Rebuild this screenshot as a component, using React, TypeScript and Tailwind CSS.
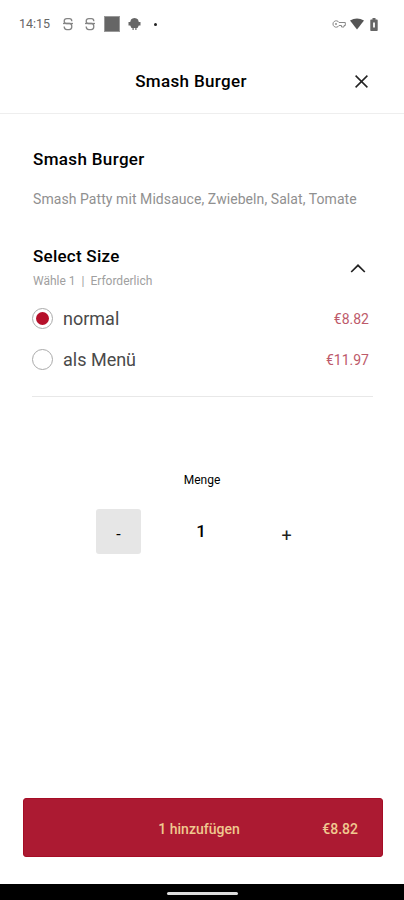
import React, { useState } from 'react'

interface SizeOption {
  id: string
  label: string
  price: number
}

const sizes: SizeOption[] = [
  { id: 'normal', label: 'normal', price: 8.82 },
  { id: 'menu', label: 'als Menü', price: 11.97 },
]

const formatPrice = (value: number) => `€${value.toFixed(2)}`

const SIcon: React.FC = () => (
  <svg className="h-[14px] w-[12px]" viewBox="0 0 12 14" fill="none" stroke="#858585" strokeWidth="1.3">
    <path d="M9.800 4.200Q9.800 1.600 7.500 1.600H4.800Q2.200 1.600 2.200 4Q2.200 6.500 4.500 6.500H7.500Q9.800 6.500 9.800 9.500Q9.800 12.600 7.200 12.600H4.800Q2.200 12.600 2.200 9.500" />
    <path d="M1 6.500H11" />
  </svg>
)

const StatusBar: React.FC = () => (
  <div className="flex h-12 items-center justify-between pl-[19px] pr-[26px]">
    <div className="flex items-center">
      <span className="w-[43px] whitespace-nowrap text-[12.5px] text-[#666]">14:15</span>
      <SIcon />
      <span className="w-[10px]" />
      <SIcon />
      <span className="ml-[9px] h-[14px] w-[14px] bg-[#666] outline outline-1 outline-[#999]" />
      <svg className="ml-[9px] h-[14px] w-[13px]" viewBox="0 0 13 14" fill="#666">
        <path d="M3 2.500L4.500 1.500Q6.500 .5 8.500 1.500L10 2.500L10.800 5H12.500V8.500H10.800L9.500 11H8.500V13H7.300V11H5.700V13H4.500V11H3.500L2.200 8.500H.5V5H2.200Z" />
      </svg>
      <span className="ml-[13px] h-[3px] w-[3px] rounded-full bg-[#222]" />
    </div>
    <div className="flex items-center">
      <svg className="h-[8px] w-[14px]" viewBox="0 0 14 8" fill="none" stroke="#888" strokeWidth="1">
        <path d="M7 2.500A3.200 3.200 0 1 0 7 5.500H9.500V7H12V5.500H13.300V2.500Z" />
        <circle cx="4" cy="4" r=".6" />
      </svg>
      <svg className="ml-[4px] h-[12px] w-[14px]" viewBox="0 0 14 12" fill="#555">
        <path d="M0 2.500Q7-1.500 14 2.500L7 11.500Z" />
      </svg>
      <svg className="ml-[6px] h-[13px] w-[8px]" viewBox="0 0 8 13">
        <path d="M2.500 0H5.500V1.500H7Q7.700 1.500 7.700 2.200V12.300Q7.700 13 7 13H1Q.3 13 .3 12.300V2.200Q.3 1.500 1 1.500H2.500Z" fill="#666" />
        <path d="M3 4.500H5V9.500H3Z" fill="#eee" />
      </svg>
    </div>
  </div>
)

const App: React.FC = () => {
  const [selected, setSelected] = useState('normal')
  const [amount, setAmount] = useState(1)

  const size = sizes.find((s) => s.id === selected) ?? sizes[0]

  return (
    <div className="flex h-[900px] w-[404px] flex-col bg-white font-['Roboto',sans-serif] text-black">
      <StatusBar />

      <header className="grid h-[66px] grid-cols-[60px_1fr_60px] items-center border-b border-[#eee] pt-px">
        <h1 className="col-start-2 -ml-[22px] pt-px text-center text-[17px] font-medium tracking-[0.35px]">Smash Burger</h1>
        <button className="flex justify-start pl-[11px]" aria-label="Close">
          <svg className="h-[13px] w-[13px]" viewBox="0 0 13 13" fill="none" stroke="#222" strokeWidth="1.5">
            <path d="M.6 .6L12.400 12.400M12.400 .6L.6 12.400" />
          </svg>
        </button>
      </header>

      <main className="flex grow flex-col pl-8 pr-[31px]">
        <h2 className="mt-[33px] h-6 pl-px text-[17px] font-medium leading-6 tracking-[0.35px]">Smash Burger</h2>
        <p className="mt-[18px] h-5 whitespace-nowrap pl-px text-[14px] leading-5 tracking-[0.07px] text-[#909090]">
          Smash Patty mit Midsauce, Zwiebeln, Salat, Tomate
        </p>

        <section className="mt-[35px] border-b border-[#e8e8e8] pb-[16px]">
          <div className="flex items-start justify-between pl-px">
            <div>
              <h2 className="h-6 text-[17px] font-medium leading-6 tracking-[0.25px]">Select Size</h2>
              <p className="mt-[5px] h-4 whitespace-pre text-[12px] leading-4 text-[#a0a0a0]">Wähle 1  |  Erforderlich</p>
            </div>
            <svg className="mr-[7px] mt-[20px] h-[9px] w-[16px]" viewBox="0 0 16 9" fill="none" stroke="#222" strokeWidth="1.7">
              <path d="M1.200 8L8 1.300L14.800 8" />
            </svg>
          </div>

          <div className="mt-[9px]">
            {sizes.map((option) => (
              <button
                key={option.id}
                onClick={() => setSelected(option.id)}
                className="flex h-[41px] w-full items-center pr-[4px]"
              >
                <span className="flex h-[21px] w-[21px] items-center justify-center rounded-full border border-[#aaa]">
                  {selected === option.id && <span className="h-[13px] w-[13px] rounded-full bg-[#b5102a]" />}
                </span>
                <span className="ml-[10px] text-[18px] text-[#4a4a4a]">{option.label}</span>
                <span className="ml-auto pt-px text-[14px] text-[#bd5a6a]">{formatPrice(option.price)}</span>
              </button>
            ))}
          </div>
        </section>

        <section className="-ml-px mt-[75px] flex flex-col items-center">
          <span className="h-4 text-[12px] leading-4">Menge</span>
          <div className="mt-[20px] flex h-[46px] w-[212px] items-center justify-between">
            <button
              onClick={() => setAmount(Math.max(1, amount - 1))}
              className="flex h-[45px] w-[45px] items-center justify-center rounded-[3px] bg-[#e6e6e6] pt-[8px] text-[16px]"
            >
              -
            </button>
            <span className="-ml-[3px] pt-[2px] text-[17px] font-medium">{amount}</span>
            <button
              onClick={() => setAmount(amount + 1)}
              className="-mr-px flex h-[45px] w-[45px] items-center justify-center pt-[8px] text-[18px] text-[#222]"
            >
              +
            </button>
          </div>
        </section>
      </main>

      <button className="mb-[27px] ml-[23px] mr-[21px] grid h-[59px] shrink-0 grid-cols-[70px_1fr_70px] items-center rounded-[3px] border border-[#a50d25] bg-[#ac1a32] pt-[3px] text-[14px] font-medium text-[#f0c890]">
        <span className="col-start-2 -ml-2 text-center">{amount} hinzufügen</span>
        <span className="pr-[24px] text-right">{formatPrice(size.price * amount)}</span>
      </button>

      <div className="flex h-4 shrink-0 items-center justify-center bg-black">
        <span className="mt-[2px] h-[3px] w-[71px] rounded-full bg-[#ddd]" />
      </div>
    </div>
  )
}

export default App
